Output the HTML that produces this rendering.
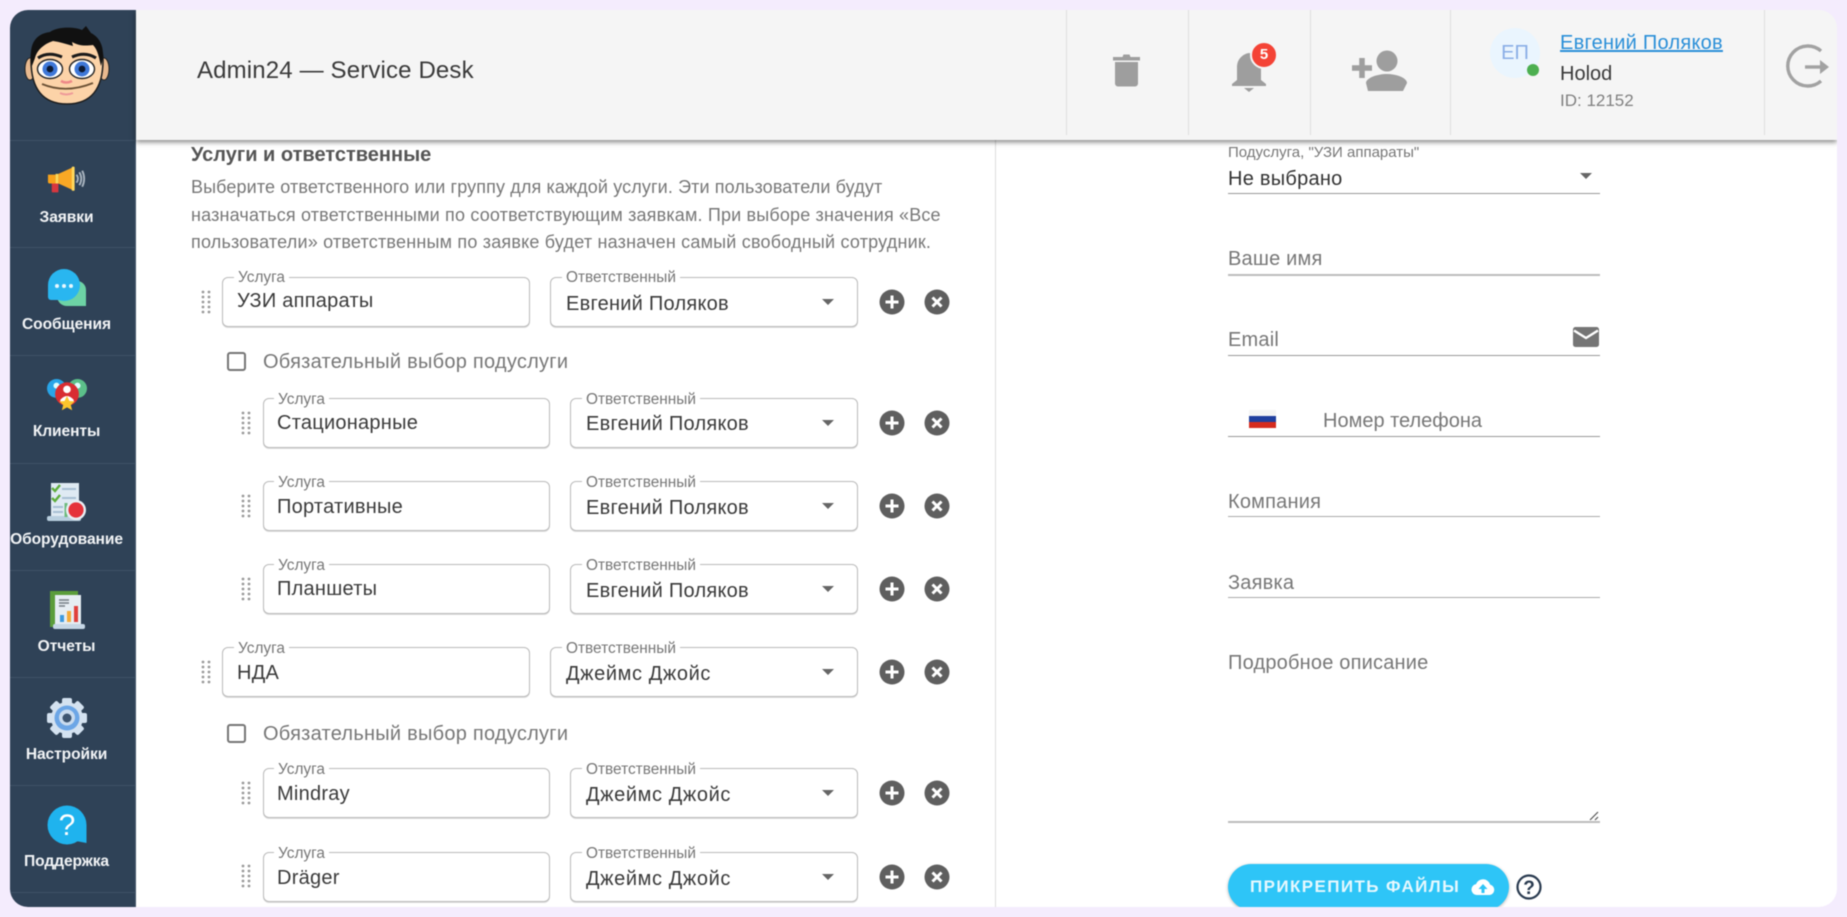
<!DOCTYPE html>
<html lang="ru"><head><meta charset="utf-8"><title>Admin24</title>
<style>
*{box-sizing:border-box}
html{background:#f4ecfd}
html,body{margin:0;padding:0;width:1847px;height:917px;overflow:hidden;font-family:"Liberation Sans",sans-serif}
body{filter:blur(.4px);background:#f4ecfd}
#win{position:absolute;left:10px;top:10px;width:1827px;height:897px;background:#fff;border-radius:18px;overflow:hidden}
.a{position:absolute;white-space:nowrap}
.t{position:absolute;white-space:nowrap;line-height:24px;height:24px}
#side{position:absolute;left:10px;top:10px;width:126px;height:897px;background:#2f4257;border-right:1px solid #43566a}
.dv{position:absolute;left:10px;width:126px;height:1px;background:#3f5266}
.ml{position:absolute;left:0;width:133px;text-align:center;color:#f2f4f6;font-weight:700;font-size:15.6px;line-height:20px;letter-spacing:-.1px}
#head{position:absolute;left:136px;top:10px;width:1701px;height:130px;background:#f5f5f5;box-shadow:0 2px 5px rgba(0,0,0,.5)}
.hd{position:absolute;top:10px;width:1px;height:125px;background:#dedede}
.f{position:absolute;height:50px;border:1px solid #bbb;border-radius:6px;background:#fff;box-shadow:0 1px 0 #ddd}
.fl{position:absolute;font-size:15.4px;color:#777;background:#fff;padding:0 4px;line-height:14px;white-space:nowrap}
.v{position:absolute;font-size:20px;letter-spacing:.25px;color:#3a3a3a;line-height:24px;white-space:nowrap}
.ar{position:absolute;width:0;height:0;border-left:6px solid transparent;border-right:6px solid transparent;border-top:6px solid #666}
.u{position:absolute;left:1228px;width:372px;height:2px;background:#bdbdbd}
.ph{position:absolute;font-size:20px;letter-spacing:.2px;color:#777;line-height:24px;white-space:nowrap}
svg{position:absolute;overflow:visible}
.cb{position:absolute;width:19px;height:19px;border:2px solid #757575;border-radius:3px}
.cl{position:absolute;font-size:20px;color:#777;line-height:24px;white-space:nowrap;letter-spacing:.25px}
</style></head><body>
<div id="win"></div>

<div id="side"></div>
<div class="dv" style="top:140px"></div><div class="dv" style="top:247px"></div><div class="dv" style="top:355px"></div><div class="dv" style="top:463px"></div><div class="dv" style="top:570px"></div><div class="dv" style="top:677px"></div><div class="dv" style="top:785px"></div><div class="dv" style="top:892px"></div>

<!-- avatar -->
<svg style="left:20px;top:20px" width="95" height="95" viewBox="0 0 95 95">
<ellipse cx="10" cy="49" rx="5" ry="11" fill="#e8b98f" stroke="#222" stroke-width="1"/><ellipse cx="84" cy="49" rx="5" ry="11" fill="#e8b98f" stroke="#222" stroke-width="1"/>
<path d="M11 40C11 70 24 84 47 84C70 84 83 70 83 40C83 22 68 10 47 10C26 10 11 22 11 40Z" fill="#fcd3a8" stroke="#1c1c1c" stroke-width="1.5"/>
<path d="M12 46C8 26 14 14 30 12C38 6 56 7 62 10L66 6L71 13C81 18 86 30 81 46C79 38 78 30 73 25C65 26 59 26 52 22L53 26C46 24 40 22 33 21C24 24 17 30 15 38Z" fill="#111"/>
<path d="M18 38Q28 31 42 37" stroke="#1a1a1a" stroke-width="3" fill="none"/><path d="M52 37Q65 31 76 38" stroke="#1a1a1a" stroke-width="3" fill="none"/>
<ellipse cx="30" cy="49" rx="12.500" ry="9.500" fill="#fff" stroke="#222" stroke-width="1.400"/><ellipse cx="62" cy="49" rx="12.500" ry="9.500" fill="#fff" stroke="#222" stroke-width="1.400"/>
<circle cx="30" cy="49" r="7.500" fill="#3f78d8"/><circle cx="62" cy="49" r="7.500" fill="#3f78d8"/><circle cx="30" cy="49" r="3.400" fill="#0d1a33"/><circle cx="62" cy="49" r="3.400" fill="#0d1a33"/>
<path d="M41 61Q46 64 52 61" stroke="#e88" stroke-width="2.600" fill="none"/>
<path d="M22 64Q46 74 73 63" stroke="#6b5134" stroke-width="1.800" fill="none"/><path d="M40 73Q46 76 53 73" stroke="#e99" stroke-width="2" fill="none"/>
</svg>

<!-- megaphone -->
<svg style="left:47px;top:165px" width="40" height="29" viewBox="0 0 42 36" preserveAspectRatio="none">
<rect x="5" y="20" width="7" height="14" rx="1" fill="#d8373f"/>
<path d="M1 12h8v11H3a2 2 0 0 1-2-2z" fill="#f7a21b"/><rect x="9" y="11" width="3" height="12" fill="#fcd95a"/>
<path d="M12 11L27 3v28L12 23z" fill="#f9a825"/><rect x="26" y="2" width="3" height="30" rx="1" fill="#ffd95e"/>
<path d="M31 12q3 5 0 10M34 9q4 8 0 16M37 7q4 10 0 20" stroke="#a9b4bf" stroke-width="2" fill="none"/>
</svg>
<!-- chat -->
<svg style="left:47px;top:269px" width="40" height="38" viewBox="0 0 40 38">
<path d="M22 12h8a9 9 0 0 1 9 9v16H20a10 10 0 0 1-10-10z" fill="#6dd3a5"/>
<circle cx="17" cy="16" r="16" fill="#29b6f0"/><path d="M1 16V28a3 3 0 0 0 3 3H17z" fill="#29b6f0"/>
<circle cx="10" cy="17" r="2" fill="#e8f8ff"/><circle cx="17" cy="17" r="2" fill="#e8f8ff"/><circle cx="24" cy="17" r="2" fill="#e8f8ff"/>
</svg>
<!-- clients -->
<svg style="left:47px;top:379px" width="40" height="32" viewBox="0 0 42 34" preserveAspectRatio="none">
<circle cx="10" cy="10" r="10" fill="#29a5e8"/><circle cx="32" cy="10" r="10" fill="#5cc08a"/>
<circle cx="10" cy="7" r="3.200" fill="#dff"/><circle cx="32" cy="7" r="3.200" fill="#dff"/>
<circle cx="21" cy="16" r="12.500" fill="#d92d32"/><circle cx="21" cy="11" r="4" fill="#fff"/><path d="M14 22q7-8 14 0v2H14z" fill="#fff"/>
<path d="M21 18l2.600 5.400 5.600.4-4.200 3.800 1.400 5.600-5.400-3-5.400 3 1.400-5.600-4.200-3.800 5.600-.4z" fill="#fbc52d"/>
</svg>
<!-- equipment -->
<svg style="left:47px;top:483px" width="40" height="40" viewBox="0 0 40 40">
<rect x="4" y="0" width="28" height="34" fill="#dfeaf3"/>
<rect x="0" y="33" width="34" height="5" rx="2" fill="#b9cfdf"/>
<path d="M5 5l3 3 5-6M5 15l3 3 5-6" stroke="#5fae3c" stroke-width="2.400" fill="none"/>
<path d="M15 6h14M15 15h14M6 24h10M6 29h10" stroke="#a7bfd4" stroke-width="2" fill="none"/>
<path d="M19 20v14" stroke="#6dbb7d" stroke-width="3"/>
<circle cx="29" cy="27" r="10" fill="#e9eef3"/><circle cx="29" cy="27" r="7.600" fill="#e5323a"/>
</svg>
<!-- reports -->
<svg style="left:50px;top:591px" width="36" height="40" viewBox="0 0 36 40">
<rect x="0" y="0" width="28" height="36" fill="#5b9d3b"/>
<rect x="5" y="4" width="26" height="31" fill="#e6edf3"/><rect x="3" y="33" width="32" height="5" rx="2" fill="#c6d7e6"/>
<path d="M9 9h10M9 12h10M9 15h6" stroke="#757d85" stroke-width="1.600"/>
<rect x="10" y="24" width="4" height="7" fill="#3f9be0"/><rect x="17" y="20" width="4" height="11" fill="#f5ab3a"/><rect x="24" y="15" width="4" height="16" fill="#e0403c"/>
</svg>
<!-- gear -->
<svg style="left:47px;top:698px" width="40" height="40" viewBox="0 0 40 40">
<g fill="#d4e2f0"><circle cx="20" cy="20" r="16"/><rect x="15" y="0" width="10" height="40" rx="2"/><rect x="15" y="0" width="10" height="40" rx="2" transform="rotate(45 20 20)"/><rect x="15" y="0" width="10" height="40" rx="2" transform="rotate(90 20 20)"/><rect x="15" y="0" width="10" height="40" rx="2" transform="rotate(135 20 20)"/></g>
<circle cx="20" cy="20" r="12.500" fill="#6ca6e6"/><circle cx="20" cy="19.500" r="8" fill="#c9dbee"/><circle cx="20" cy="20" r="4.500" fill="#3d5570"/>
</svg>
<!-- support -->
<svg style="left:47px;top:805px" width="40" height="40" viewBox="0 0 40 40">
<circle cx="20" cy="20" r="19.500" fill="#1fb3ee"/><path d="M24 20H39.500V38L29 36z" fill="#1fb3ee"/>
<text x="20" y="30" text-anchor="middle" font-family="Liberation Sans" font-size="30" fill="#fff">?</text>
</svg>

<div class="ml" style="top:208px">Заявки</div>
<div class="ml" style="top:315px">Сообщения</div>
<div class="ml" style="top:422px">Клиенты</div>
<div class="ml" style="top:530px">Оборудование</div>
<div class="ml" style="top:637px">Отчеты</div>
<div class="ml" style="top:745px">Настройки</div>
<div class="ml" style="top:852px">Поддержка</div>

<!-- left column text -->
<div class="t" style="left:191px;top:143px;font-size:20px;font-weight:700;color:#555">Услуги и ответственные</div>
<div class="t" style="left:191px;top:175px;font-size:18px;letter-spacing:.12px;color:#777">Выберите ответственного или группу для каждой услуги. Эти пользователи будут</div>
<div class="t" style="left:191px;top:203px;font-size:18px;letter-spacing:.17px;color:#777">назначаться ответственными по соответствующим заявкам. При выборе значения «Все</div>
<div class="t" style="left:191px;top:230px;font-size:18px;letter-spacing:.2px;color:#777">пользователи» ответственным по заявке будет назначен самый свободный сотрудник.</div>

<!-- Row 1 -->
<svg style="left:201px;top:290px" width="12" height="24"><g fill="#9a9a9a"><circle cx="2" cy="2" r="1.400"/><circle cx="8" cy="2" r="1.400"/><circle cx="2" cy="7" r="1.400"/><circle cx="8" cy="7" r="1.400"/><circle cx="2" cy="12" r="1.400"/><circle cx="8" cy="12" r="1.400"/><circle cx="2" cy="17" r="1.400"/><circle cx="8" cy="17" r="1.400"/><circle cx="2" cy="22" r="1.400"/><circle cx="8" cy="22" r="1.400"/></g></svg>
<div class="f" style="left:222px;top:277px;width:308px"></div><div class="fl" style="left:234px;top:271px">Услуга</div><div class="v" style="left:237px;top:289px">УЗИ аппараты</div>
<div class="f" style="left:550px;top:277px;width:308px"></div><div class="fl" style="left:562px;top:271px">Ответственный</div><div class="v" style="left:566px;top:292px">Евгений Поляков</div><div class="ar" style="left:822px;top:299px"></div>
<svg style="left:879px;top:289px" width="26" height="26"><circle cx="13" cy="13" r="12.500" fill="#5f5f5f"/><path d="M13 6.500v13M6.500 13h13" stroke="#fff" stroke-width="3"/></svg>
<svg style="left:924px;top:289px" width="26" height="26"><circle cx="13" cy="13" r="12.500" fill="#5f5f5f"/><path d="M8.500 8.500l9 9M17.500 8.500l-9 9" stroke="#fff" stroke-width="3"/></svg>
<div class="cb" style="left:227px;top:352px"></div><div class="cl" style="left:263px;top:350px">Обязательный выбор подуслуги</div>

<!-- Sub row 1 -->
<svg style="left:241px;top:411px" width="12" height="24"><g fill="#9a9a9a"><circle cx="2" cy="2" r="1.400"/><circle cx="8" cy="2" r="1.400"/><circle cx="2" cy="7" r="1.400"/><circle cx="8" cy="7" r="1.400"/><circle cx="2" cy="12" r="1.400"/><circle cx="8" cy="12" r="1.400"/><circle cx="2" cy="17" r="1.400"/><circle cx="8" cy="17" r="1.400"/><circle cx="2" cy="22" r="1.400"/><circle cx="8" cy="22" r="1.400"/></g></svg>
<div class="f" style="left:263px;top:398px;width:287px"></div><div class="fl" style="left:274px;top:393px">Услуга</div><div class="v" style="left:277px;top:411px">Стационарные</div>
<div class="f" style="left:570px;top:398px;width:288px"></div><div class="fl" style="left:582px;top:393px">Ответственный</div><div class="v" style="left:586px;top:412px">Евгений Поляков</div><div class="ar" style="left:822px;top:420px"></div>
<svg style="left:879px;top:410px" width="26" height="26"><circle cx="13" cy="13" r="12.500" fill="#5f5f5f"/><path d="M13 6.500v13M6.500 13h13" stroke="#fff" stroke-width="3"/></svg>
<svg style="left:924px;top:410px" width="26" height="26"><circle cx="13" cy="13" r="12.500" fill="#5f5f5f"/><path d="M8.500 8.500l9 9M17.500 8.500l-9 9" stroke="#fff" stroke-width="3"/></svg>

<!-- Sub row 2 -->
<svg style="left:241px;top:494px" width="12" height="24"><g fill="#9a9a9a"><circle cx="2" cy="2" r="1.400"/><circle cx="8" cy="2" r="1.400"/><circle cx="2" cy="7" r="1.400"/><circle cx="8" cy="7" r="1.400"/><circle cx="2" cy="12" r="1.400"/><circle cx="8" cy="12" r="1.400"/><circle cx="2" cy="17" r="1.400"/><circle cx="8" cy="17" r="1.400"/><circle cx="2" cy="22" r="1.400"/><circle cx="8" cy="22" r="1.400"/></g></svg>
<div class="f" style="left:263px;top:481px;width:287px"></div><div class="fl" style="left:274px;top:476px">Услуга</div><div class="v" style="left:277px;top:495px">Портативные</div>
<div class="f" style="left:570px;top:481px;width:288px"></div><div class="fl" style="left:582px;top:476px">Ответственный</div><div class="v" style="left:586px;top:496px">Евгений Поляков</div><div class="ar" style="left:822px;top:503px"></div>
<svg style="left:879px;top:493px" width="26" height="26"><circle cx="13" cy="13" r="12.500" fill="#5f5f5f"/><path d="M13 6.500v13M6.500 13h13" stroke="#fff" stroke-width="3"/></svg>
<svg style="left:924px;top:493px" width="26" height="26"><circle cx="13" cy="13" r="12.500" fill="#5f5f5f"/><path d="M8.500 8.500l9 9M17.500 8.500l-9 9" stroke="#fff" stroke-width="3"/></svg>

<!-- Sub row 3 -->
<svg style="left:241px;top:577px" width="12" height="24"><g fill="#9a9a9a"><circle cx="2" cy="2" r="1.400"/><circle cx="8" cy="2" r="1.400"/><circle cx="2" cy="7" r="1.400"/><circle cx="8" cy="7" r="1.400"/><circle cx="2" cy="12" r="1.400"/><circle cx="8" cy="12" r="1.400"/><circle cx="2" cy="17" r="1.400"/><circle cx="8" cy="17" r="1.400"/><circle cx="2" cy="22" r="1.400"/><circle cx="8" cy="22" r="1.400"/></g></svg>
<div class="f" style="left:263px;top:564px;width:287px"></div><div class="fl" style="left:274px;top:559px">Услуга</div><div class="v" style="left:277px;top:577px">Планшеты</div>
<div class="f" style="left:570px;top:564px;width:288px"></div><div class="fl" style="left:582px;top:559px">Ответственный</div><div class="v" style="left:586px;top:579px">Евгений Поляков</div><div class="ar" style="left:822px;top:586px"></div>
<svg style="left:879px;top:576px" width="26" height="26"><circle cx="13" cy="13" r="12.500" fill="#5f5f5f"/><path d="M13 6.500v13M6.500 13h13" stroke="#fff" stroke-width="3"/></svg>
<svg style="left:924px;top:576px" width="26" height="26"><circle cx="13" cy="13" r="12.500" fill="#5f5f5f"/><path d="M8.500 8.500l9 9M17.500 8.500l-9 9" stroke="#fff" stroke-width="3"/></svg>

<!-- Row 2 -->
<svg style="left:201px;top:660px" width="12" height="24"><g fill="#9a9a9a"><circle cx="2" cy="2" r="1.400"/><circle cx="8" cy="2" r="1.400"/><circle cx="2" cy="7" r="1.400"/><circle cx="8" cy="7" r="1.400"/><circle cx="2" cy="12" r="1.400"/><circle cx="8" cy="12" r="1.400"/><circle cx="2" cy="17" r="1.400"/><circle cx="8" cy="17" r="1.400"/><circle cx="2" cy="22" r="1.400"/><circle cx="8" cy="22" r="1.400"/></g></svg>
<div class="f" style="left:222px;top:647px;width:308px"></div><div class="fl" style="left:234px;top:642px">Услуга</div><div class="v" style="left:237px;top:661px">НДА</div>
<div class="f" style="left:550px;top:647px;width:308px"></div><div class="fl" style="left:562px;top:642px">Ответственный</div><div class="v" style="left:566px;top:662px;letter-spacing:.6px">Джеймс Джойс</div><div class="ar" style="left:822px;top:669px"></div>
<svg style="left:879px;top:659px" width="26" height="26"><circle cx="13" cy="13" r="12.500" fill="#5f5f5f"/><path d="M13 6.500v13M6.500 13h13" stroke="#fff" stroke-width="3"/></svg>
<svg style="left:924px;top:659px" width="26" height="26"><circle cx="13" cy="13" r="12.500" fill="#5f5f5f"/><path d="M8.500 8.500l9 9M17.500 8.500l-9 9" stroke="#fff" stroke-width="3"/></svg>
<div class="cb" style="left:227px;top:724px"></div><div class="cl" style="left:263px;top:722px">Обязательный выбор подуслуги</div>

<!-- Sub Mindray -->
<svg style="left:241px;top:781px" width="12" height="24"><g fill="#9a9a9a"><circle cx="2" cy="2" r="1.400"/><circle cx="8" cy="2" r="1.400"/><circle cx="2" cy="7" r="1.400"/><circle cx="8" cy="7" r="1.400"/><circle cx="2" cy="12" r="1.400"/><circle cx="8" cy="12" r="1.400"/><circle cx="2" cy="17" r="1.400"/><circle cx="8" cy="17" r="1.400"/><circle cx="2" cy="22" r="1.400"/><circle cx="8" cy="22" r="1.400"/></g></svg>
<div class="f" style="left:263px;top:768px;width:287px"></div><div class="fl" style="left:274px;top:763px">Услуга</div><div class="v" style="left:277px;top:782px">Mindray</div>
<div class="f" style="left:570px;top:768px;width:288px"></div><div class="fl" style="left:582px;top:763px">Ответственный</div><div class="v" style="left:586px;top:783px;letter-spacing:.6px">Джеймс Джойс</div><div class="ar" style="left:822px;top:790px"></div>
<svg style="left:879px;top:780px" width="26" height="26"><circle cx="13" cy="13" r="12.500" fill="#5f5f5f"/><path d="M13 6.500v13M6.500 13h13" stroke="#fff" stroke-width="3"/></svg>
<svg style="left:924px;top:780px" width="26" height="26"><circle cx="13" cy="13" r="12.500" fill="#5f5f5f"/><path d="M8.500 8.500l9 9M17.500 8.500l-9 9" stroke="#fff" stroke-width="3"/></svg>

<!-- Sub Dräger -->
<svg style="left:241px;top:864px" width="12" height="24"><g fill="#9a9a9a"><circle cx="2" cy="2" r="1.400"/><circle cx="8" cy="2" r="1.400"/><circle cx="2" cy="7" r="1.400"/><circle cx="8" cy="7" r="1.400"/><circle cx="2" cy="12" r="1.400"/><circle cx="8" cy="12" r="1.400"/><circle cx="2" cy="17" r="1.400"/><circle cx="8" cy="17" r="1.400"/><circle cx="2" cy="22" r="1.400"/><circle cx="8" cy="22" r="1.400"/></g></svg>
<div class="f" style="left:263px;top:852px;width:287px"></div><div class="fl" style="left:274px;top:847px">Услуга</div><div class="v" style="left:277px;top:866px">Dräger</div>
<div class="f" style="left:570px;top:852px;width:288px"></div><div class="fl" style="left:582px;top:847px">Ответственный</div><div class="v" style="left:586px;top:867px;letter-spacing:.6px">Джеймс Джойс</div><div class="ar" style="left:822px;top:874px"></div>
<svg style="left:879px;top:864px" width="26" height="26"><circle cx="13" cy="13" r="12.500" fill="#5f5f5f"/><path d="M13 6.500v13M6.500 13h13" stroke="#fff" stroke-width="3"/></svg>
<svg style="left:924px;top:864px" width="26" height="26"><circle cx="13" cy="13" r="12.500" fill="#5f5f5f"/><path d="M8.500 8.500l9 9M17.500 8.500l-9 9" stroke="#fff" stroke-width="3"/></svg>

<!-- divider -->
<div class="a" style="left:995px;top:140px;width:1px;height:767px;background:#dcdcdc"></div>

<!-- right column -->
<div class="a" style="left:1228px;top:146px;font-size:15px;line-height:14px;color:#777">Подуслуга, "УЗИ аппараты"</div>
<div class="v" style="left:1228px;top:167px;color:#333">Не выбрано</div>
<div class="ar" style="left:1580px;top:173px"></div>
<div class="u" style="top:193px;height:1px;background:#999"></div>
<div class="ph" style="left:1228px;top:247px">Ваше имя</div><div class="u" style="top:274px"></div>
<div class="ph" style="left:1228px;top:328px">Email</div><div class="u" style="top:355px;height:1px;background:#999"></div>
<svg style="left:1573px;top:327px" width="26" height="20"><rect width="26" height="20" rx="2.500" fill="#757575"/><path d="M1 3.500l12 7.500 12-7.500" stroke="#fff" stroke-width="2.400" fill="none"/></svg>
<div class="a" style="left:1249px;top:410px;width:27px;height:6px;background:#f4f4f4"></div><div class="a" style="left:1249px;top:416px;width:27px;height:6px;background:#1f3f9e"></div><div class="a" style="left:1249px;top:422px;width:27px;height:6px;background:#d52b1e"></div>
<div class="ph" style="left:1323px;top:409px;letter-spacing:0">Номер телефона</div><div class="u" style="top:436px;height:1px;background:#999"></div>
<div class="ph" style="left:1228px;top:490px">Компания</div><div class="u" style="top:516px;height:1px;background:#aaa"></div>
<div class="ph" style="left:1228px;top:571px">Заявка</div><div class="u" style="top:597px;height:1px;background:#aaa"></div>
<div class="ph" style="left:1228px;top:651px">Подробное описание</div><div class="u" style="top:821px"></div>
<svg style="left:1589px;top:811px" width="10" height="10"><path d="M1 9L9 1M6 9L9 6" stroke="#555" stroke-width="1.200"/></svg>

<div class="a" style="left:1228px;top:864px;width:281px;height:46px;border-radius:23px;background:#2ec5f7;box-shadow:0 1px 3px rgba(0,0,0,.3)"></div>
<div class="a" style="left:1250px;top:877px;font-size:17px;line-height:20px;font-weight:700;color:#e6f8fe;letter-spacing:1.400px">ПРИКРЕПИТЬ ФАЙЛЫ</div>
<svg style="left:1471px;top:878px" width="24" height="18" viewBox="0 0 24 18"><path d="M5.500 17A5.500 5.500 0 0 1 5 6.100 7.500 7.500 0 0 1 19.200 6.600 5.300 5.300 0 0 1 18.700 17z" fill="#fff"/><path d="M12 6l-4.500 5H10.500v4h3v-4h3z" fill="#2ec5f7"/></svg>
<svg style="left:1516px;top:874px" width="26" height="26"><circle cx="13" cy="13" r="11.500" fill="none" stroke="#2a3b50" stroke-width="2.200"/><text x="13" y="20" text-anchor="middle" font-family="Liberation Sans" font-size="19" font-weight="700" fill="#2a3b50">?</text></svg>

<!-- page frame to clip bottom -->
<div class="a" style="left:0;top:907px;width:1847px;height:10px;background:#f4ecfd"></div>

<!-- header -->
<div id="head"></div>
<div class="hd" style="left:1066px"></div><div class="hd" style="left:1188px"></div><div class="hd" style="left:1310px"></div><div class="hd" style="left:1450px"></div><div class="hd" style="left:1764px"></div>
<div class="a" style="left:197px;top:55px;font-size:24px;letter-spacing:.15px;line-height:32px;color:#3a3a3a">Admin24 — Service Desk</div>
<svg style="left:1113px;top:52px" width="27" height="35" viewBox="0 0 27 35"><path d="M0 5h9.500l1-2.500h6l1 2.500H27v3.500H0z" fill="#9e9e9e"/><path d="M2 10h23v21.500a3 3 0 0 1-3 3H5a3 3 0 0 1-3-3z" fill="#9e9e9e"/></svg>
<svg style="left:1232px;top:50px" width="34" height="42" viewBox="0 0 34 42"><path d="M17 3a14 14 0 0 1 12 13v14l5 4v2H0v-2l5-4V16A14 14 0 0 1 17 3z" fill="#9e9e9e"/><path d="M12 38h10l-5 4z" fill="#9e9e9e"/></svg>
<div class="a" style="left:1250px;top:41px;width:28px;height:28px;border-radius:50%;background:#f44336;border:2px solid #f5f5f5;color:#fff;font-size:15px;font-weight:700;text-align:center;line-height:24px">5</div>
<svg style="left:1351px;top:50px" width="56" height="42" viewBox="0 0 56 42"><circle cx="36" cy="11" r="10.500" fill="#9e9e9e"/><path d="M15 33c0-5 11-9 21-9s20 4 20 9l-4 8H17z" fill="#9e9e9e"/><path d="M1 18h20M11 8v20" stroke="#9e9e9e" stroke-width="5.500"/></svg>
<div class="a" style="left:1490px;top:28px;width:50px;height:50px;border-radius:50%;background:#eaf5fe;color:#8aaee6;font-size:20px;line-height:50px;text-align:center">ЕП</div>
<div class="a" style="left:1527px;top:64px;width:12px;height:12px;border-radius:50%;background:#4caf50"></div>
<div class="a" style="left:1560px;top:31px;font-size:20px;letter-spacing:.25px;line-height:24px;color:#2a8fd8;text-decoration:underline">Евгений Поляков</div>
<div class="a" style="left:1560px;top:62px;font-size:20px;line-height:24px;color:#3a3a3a">Holod</div>
<div class="a" style="left:1560px;top:91px;font-size:17px;line-height:20px;color:#808080">ID: 12152</div>
<svg style="left:1787px;top:45px" width="42" height="42" viewBox="0 0 42 42"><path d="M34 6A20 20 0 1 0 34 36" fill="none" stroke="#a2a2a2" stroke-width="3.400"/><path d="M18 22h16" stroke="#a2a2a2" stroke-width="3.400"/><path d="M33 15l9 7-9 7z" fill="#a2a2a2"/></svg>

<!-- corner mask -->
<svg style="left:0;top:0" width="1847" height="917" viewBox="0 0 1847 917"><path fill-rule="evenodd" fill="#f4ecfd" d="M0 0H1847V917H0ZM28 10A18 18 0 0 0 10 28V889A18 18 0 0 0 28 907H1819A18 18 0 0 0 1837 889V28A18 18 0 0 0 1819 10Z"/></svg>
</body></html>
